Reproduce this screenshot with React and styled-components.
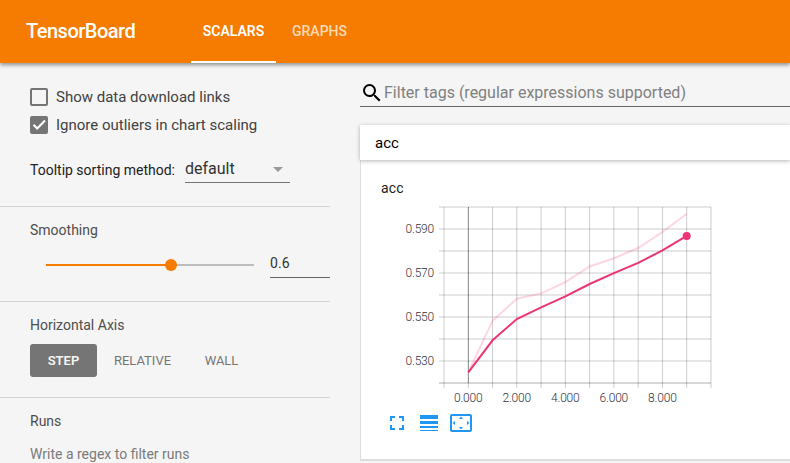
import React, { useState } from "react";
import styled, { createGlobalStyle } from "styled-components";

const GlobalStyle = createGlobalStyle`
  * { box-sizing: border-box; }
  body {
    margin: 0;
    background: #f5f5f5;
    font-family: Roboto, "Liberation Sans", sans-serif;
    color: #212121;
    overflow: hidden;
  }
  button, input { font-family: inherit; }
`;

const Page = styled.div`
  display: flex;
  flex-direction: column;
  width: 100%;
  height: 463px;
  overflow: hidden;
`;

const Toolbar = styled.header`
  display: flex;
  flex: none;
  height: 63px;
  padding-left: 26px;
  background: #f57c00;
  color: #fff;
  box-shadow: 0 2px 4px rgba(0, 0, 0, 0.42);
  z-index: 1;
`;

const Brand = styled.h1`
  width: 165px;
  margin: 0;
  font-size: 20px;
  font-weight: 500;
  line-height: 62px;
  letter-spacing: -0.5px;
`;

const Tabs = styled.nav`
  display: flex;
  gap: 4px;
`;

const Tab = styled.button`
  width: ${(p) => p.$width}px;
  height: 63px;
  padding: 2px 0 0;
  border: 0;
  border-bottom: 2px solid ${(p) => (p.$active ? "#fff" : "transparent")};
  background: none;
  color: #fff;
  font-size: 14px;
  font-weight: ${(p) => (p.$active ? 600 : 500)};
  line-height: 59px;
  white-space: nowrap;

  span { opacity: ${(p) => (p.$active ? 1 : 0.7)}; }
`;

const Body = styled.main`
  display: flex;
  flex: 1;
  min-height: 0;
`;

const Sidebar = styled.aside`
  flex: none;
  width: 330px;
`;

const Section = styled.section`
  height: ${(p) => p.$height}px;
  padding: ${(p) => p.$top}px 0 0 30px;
  border-bottom: 1px solid #d4d4d4;
`;

const CheckRow = styled.label`
  display: flex;
  align-items: center;
  gap: 8px;
  height: 28px;
  font-size: 15px;
  color: #424242;
`;

const CheckBox = styled.span`
  display: flex;
  width: 18px;
  height: 18px;
  border: 2px solid #757575;
  border-radius: 2px;
  background: ${(p) => (p.$checked ? "#757575" : "transparent")};

  svg { width: 14px; height: 14px; }
`;

const SortRow = styled.div`
  display: flex;
  align-items: center;
  gap: 10px;
  margin-top: 15px;
  height: 30px;
  font-size: 14px;
  color: #212121;
`;

const SortLabel = styled.span`
  padding-top: 2px;
`;

const Dropdown = styled.div`
  display: flex;
  align-items: center;
  justify-content: space-between;
  width: 105px;
  height: 28px;
  padding-right: 7px;
  border-bottom: 1px solid #757575;
  font-size: 16px;
  color: #333;
`;

const Caret = styled.span`
  border: 5px solid transparent;
  border-top-color: #999;
  border-bottom: 0;
  margin-top: 2px;
`;

const Title = styled.h2`
  margin: 0;
  font-size: 14px;
  font-weight: 400;
  line-height: 16px;
  color: #4d4d4d;
`;

const SliderRow = styled.div`
  display: flex;
  align-items: center;
  margin-top: 11px;
  height: 30px;
`;

const Track = styled.div`
  display: flex;
  align-items: center;
  width: 208px;
  height: 2px;
  margin: 2px 16px 0;
  background: #bdbdbd;
`;

const Fill = styled.div`
  width: 60%;
  height: 2px;
  background: #f57c00;
`;

const Knob = styled.div`
  flex: none;
  width: 12px;
  height: 12px;
  margin-left: -6px;
  border-radius: 50%;
  background: #f57c00;
`;

const NumberField = styled.div`
  width: 60px;
  height: 30px;
  margin-top: -2px;
  padding-top: 6px;
  border-bottom: 1px solid #616161;
  font-size: 14px;
  line-height: 18px;
  letter-spacing: 0.15px;
  color: #333;
`;

const ButtonRow = styled.div`
  display: flex;
  margin-top: 11px;
`;

const AxisButton = styled.button`
  height: 33px;
  width: ${(p) => p.$width}px;
  padding: 0;
  border: 0;
  border-radius: 3px;
  background: ${(p) => (p.$active ? "#757575" : "transparent")};
  color: ${(p) => (p.$active ? "#f5f5f5" : "#757575")};
  font-size: 13px;
  font-weight: ${(p) => (p.$active ? 600 : 400)};
`;

const Hint = styled.div`
  margin-top: 17px;
  font-size: 14px;
  line-height: 16px;
  color: #7b7b7b;
`;

const Content = styled.section`
  flex: 1;
  min-width: 0;
  padding: 16px 0 0 30px;
`;

const SearchBar = styled.div`
  display: flex;
  align-items: center;
  height: 28px;
  padding-bottom: 1px;
  border-bottom: 1px solid #666;
  font-size: 16px;
  color: #808080;

  svg { width: 24px; height: 24px; margin-top: 2px; }
`;

const CardHeader = styled.div`
  position: relative;
  height: 35px;
  margin-top: 18px;
  padding-left: 15px;
  background: #fff;
  box-shadow: 0 1px 4px rgba(0, 0, 0, 0.3);
  font-size: 15px;
  line-height: 36px;
  color: #000;
`;

const Card = styled.div`
  height: 301px;
  padding: 19px 0 0 20px;
  border-left: 1px solid #dedede;
  border-bottom: 2px solid #dedede;
  background: #fff;
`;

const ChartTitle = styled.div`
  font-size: 14px;
  line-height: 18px;
  letter-spacing: 0.2px;
  color: #212121;
`;

const Chart = styled.svg`
  display: block;
  width: 340px;
  height: 215px;

  text {
    font-family: Roboto, "Liberation Sans", sans-serif;
    font-size: 12px;
    font-weight: 300;
    fill: #32313f;
    letter-spacing: -0.2px;
  }
`;

const ChartTools = styled.div`
  display: flex;
  align-items: center;
  height: 22px;
  padding-left: 4px;

  svg { display: block; fill: #2196f3; }
`;

const rows = [0, 22, 44, 66, 88, 110, 132, 154];
const columns = Array.from({ length: 12 }, (_, i) => 63 + i * 24.27);
const yLabels = [["0.590", 32], ["0.570", 76], ["0.550", 120], ["0.530", 164]];
const xLabels = ["0.000", "2.000", "4.000", "6.000", "8.000"];
const smoothed = [175.4, 143.3, 122, 110.3, 99.3, 87, 76.2, 65.9, 53.4, 38.8];
const raw = [175.4, 123.8, 101.7, 96.4, 85.2, 69.5, 61.2, 51, 35, 16.8];
const toPoints = (values) =>
  values.map((y, i) => `${87.3 + i * 24.27},${y}`).join(" ");

function AccuracyChart() {
  return (
    <Chart viewBox="0 0 340 215">
      <g stroke="#000" strokeOpacity="0.2">
        {rows.map((y) => <line key={y} x1="58" x2="330" y1={y + 10} y2={y + 10} />)}
        <line x1="58" x2="330" y1="186" y2="186" strokeOpacity="0.32" />
        {columns.map((x) => <line key={x} x1={x} x2={x} y1="10" y2="191" />)}
        <line x1="87.4" x2="87.4" y1="10" y2="186" strokeOpacity="0.33" />
      </g>
      <polyline points={toPoints(raw)} fill="none" stroke="#ee3377" strokeOpacity="0.2" strokeWidth="2" />
      <polyline points={toPoints(smoothed)} fill="none" stroke="#ee3377" strokeWidth="2" />
      <circle cx="305.7" cy="39" r="4" fill="#ee3377" />
      {yLabels.map(([label, y]) => <text key={label} x="53" y={y + 4} textAnchor="end">{label}</text>)}
      {xLabels.map((label, i) => <text key={label} x={87.2 + i * 48.54} y="205" textAnchor="middle">{label}</text>)}
    </Chart>
  );
}

export default function App() {
  const [tab, setTab] = useState("SCALARS");
  const [axis, setAxis] = useState("STEP");
  return (
    <Page>
      <GlobalStyle />
      <Toolbar>
        <Brand>TensorBoard</Brand>
        <Tabs>
          {[["SCALARS", 85], ["GRAPHS", 79]].map(([name, width]) => (
            <Tab key={name} $width={width} $active={tab === name} onClick={() => setTab(name)}><span>{name}</span></Tab>
          ))}
        </Tabs>
      </Toolbar>
      <Body>
        <Sidebar>
          <Section $height={144} $top={20}>
            <CheckRow><CheckBox />Show data download links</CheckRow>
            <CheckRow>
              <CheckBox $checked>
                <svg viewBox="0 0 14 14"><path d="M1.5 6.8 5.2 10.5 13 2.5" fill="none" stroke="#fff" strokeWidth="2" /></svg>
              </CheckBox>
              Ignore outliers in chart scaling
            </CheckRow>
            <SortRow>
              <SortLabel>Tooltip sorting method:</SortLabel>
              <Dropdown>default<Caret /></Dropdown>
            </SortRow>
          </Section>
          <Section $height={95} $top={15}>
            <Title>Smoothing</Title>
            <SliderRow>
              <Track><Fill /><Knob /></Track>
              <NumberField>0.6</NumberField>
            </SliderRow>
          </Section>
          <Section $height={96} $top={15}>
            <Title>Horizontal Axis</Title>
            <ButtonRow>
              {[["STEP", 67], ["RELATIVE", 91], ["WALL", 67]].map(([name, width]) => (
                <AxisButton key={name} $width={width} $active={axis === name} onClick={() => setAxis(name)}>{name}</AxisButton>
              ))}
            </ButtonRow>
          </Section>
          <Section $height={96} $top={15}>
            <Title>Runs</Title>
            <Hint>Write a regex to filter runs</Hint>
          </Section>
        </Sidebar>
        <Content>
          <SearchBar>
            <svg viewBox="0 0 24 24"><path fill="#000" d="M15.5 14h-.79l-.28-.27A6.47 6.47 0 0 0 16 9.5 6.5 6.5 0 1 0 9.5 16c1.61 0 3.09-.59 4.23-1.57l.27.28v.79l5 4.99L20.49 19l-4.99-5zm-6 0C7.01 14 5 11.99 5 9.5S7.01 5 9.5 5 14 7.01 14 9.5 11.99 14 9.5 14z" /></svg>
            Filter tags (regular expressions supported)
          </SearchBar>
          <CardHeader>acc</CardHeader>
          <Card>
            <ChartTitle>acc</ChartTitle>
            <AccuracyChart />
            <ChartTools>
              <svg width="30" height="24" viewBox="0 0 30 24"><path d="M7 14H5v5h5v-2H7zM5 10h2V7h3V5H5zM17 17h-3v2h5v-5h-2zM14 5v2h3v3h2V5z" /></svg>
              <svg width="34" height="24" viewBox="0 0 34 24"><path d="M5 4h18v4H5zM5 10h18v3H5zM5 15h18v2H5zM5 19h18v1H5z" /></svg>
              <svg width="24" height="24" viewBox="0 0 24 24"><path d="M12 5.5 10 8h4zM18 10v4l2.5-1.99zM6 10l-2.5 2.01L6 14zM14 16h-4l2.01 2.5zM21 3H3c-1.1 0-2 .9-2 2v14c0 1.1.9 2 2 2h18c1.1 0 2-.9 2-2V5c0-1.1-.9-2-2-2zm0 16.01H3V4.99h18z" /></svg>
            </ChartTools>
          </Card>
        </Content>
      </Body>
    </Page>
  );
}
